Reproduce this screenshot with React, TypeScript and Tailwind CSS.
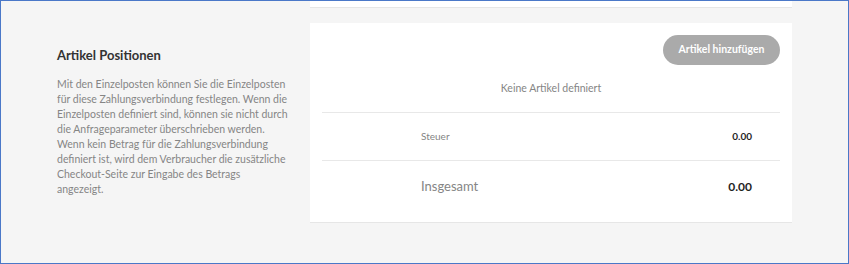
export default function App() {
  return (
    <div className="h-[264px] w-[849px] overflow-hidden border border-[#4a78c8] bg-[#f5f5f5] font-['Lato','Noto_Sans',sans-serif]">
      {/* previous section end */}
      <div className="ml-[309px] h-[7px] w-[482px] border-b border-[#e6e6e6] bg-white" />

      <div className="mt-[15px] flex">
        {/* description */}
        <div className="w-[309px] shrink-0 pl-[56px] pr-[22px] pt-[23px]">
          <h2 className="text-[13px] leading-[18px] font-bold text-[#333333]">
            Artikel Positionen
          </h2>
          <p className="mt-[13px] text-[10.5px] leading-[15px] text-[#858585]">
            Mit den Einzelposten können Sie die Einzelposten für diese
            Zahlungsverbindung festlegen. Wenn die Einzelposten definiert sind,
            können sie nicht durch die Anfrageparameter überschrieben werden.
            Wenn kein Betrag für die Zahlungsverbindung definiert ist, wird dem
            Verbraucher die zusätzliche Checkout-Seite zur Eingabe des Betrags
            angezeigt.
          </p>
        </div>

        {/* items card */}
        <div className="w-[482px] shrink-0 border-b border-[#e6e6e6] bg-white px-[12px] pt-[12px] pb-[10px]">
          <div className="flex justify-end">
            <button className="h-[30px] w-[117px] rounded-full bg-[#aaaaaa] text-[10.5px] font-bold text-white">
              Artikel hinzufügen
            </button>
          </div>

          <div className="mt-[15px] border-b border-[#e8e8e8] pb-[16px] text-center text-[10.5px] leading-[16px] text-[#858585]">
            Keine Artikel definiert
          </div>

          <div className="flex h-[48px] items-center justify-between border-b border-[#e8e8e8] pl-[99px] pr-[28px]">
            <span className="text-[10px] text-[#858585]">Steuer</span>
            <span className="text-[10px] font-bold text-[#1f1f1f]">0.00</span>
          </div>

          <div className="flex h-[51px] items-center justify-between pl-[99px] pr-[28px]">
            <span className="text-[13px] text-[#858585]">Insgesamt</span>
            <span className="text-[12px] font-bold text-[#1f1f1f]">0.00</span>
          </div>
        </div>
      </div>
    </div>
  );
}
